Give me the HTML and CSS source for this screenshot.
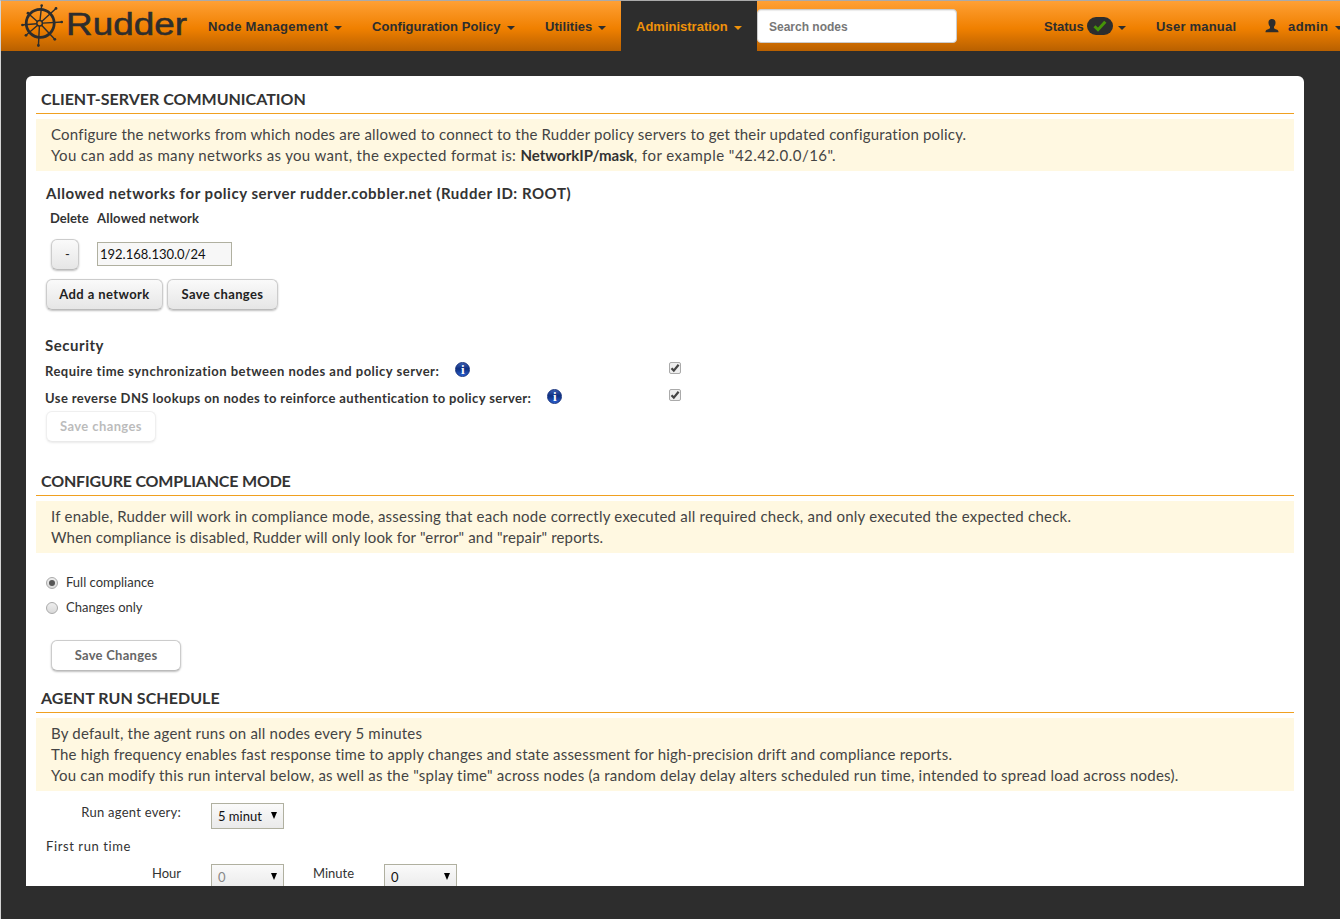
FILE: index.html
```html
<!DOCTYPE html>
<html lang="en">
<head>
<meta charset="utf-8">
<title>Rudder - Administration</title>
<link rel="stylesheet" href="styles.css">
</head>
<body>
<header class="navbar">
  <a class="brand">
    <svg width="168" height="50" viewBox="0 0 168 50">
      <g fill="none" stroke="#2d2d2d">
        <circle cx="19.2" cy="22.3" r="14" stroke-width="2.8"/>
        <circle cx="18.6" cy="22.3" r="2.8" stroke-width="1.5"/>
        <path stroke-width="1.4" d="M20.7 4L19 19.5M18.4 25L17.4 45M.7 24L15.8 22.7M21.5 22.1L41.5 21M6.7 12L16.3 20.6M20.6 24.2L34 38.5M35.5 7L20.7 20.4M16.6 24.3L4.7 34.5"/>
      </g>
      <g fill="#2d2d2d"><circle cx="20.7" cy="4.5" r="1.3"/><circle cx="17.4" cy="44.5" r="1.4"/><circle cx="1.5" cy="24" r="1.3"/><circle cx="40.7" cy="21" r="1.3"/><circle cx="7" cy="12.2" r="1.4"/><circle cx="33.8" cy="38.3" r="1.4"/><circle cx="35" cy="7.4" r="1.4"/><circle cx="5" cy="34.3" r="1.4"/></g>
      <text class="brand-name" x="45" y="34" textLength="121" lengthAdjust="spacingAndGlyphs">Rudder</text>
    </svg>
  </a>
  <nav class="menu">
    <a class="menu-item item-node">Node Management<i class="caret"></i></a>
    <a class="menu-item item-policy">Configuration Policy<i class="caret"></i></a>
    <a class="menu-item item-util">Utilities<i class="caret"></i></a>
    <a class="menu-item item-admin active">Administration<i class="caret"></i></a>
  </nav>
  <input class="search" placeholder="Search nodes">
  <nav class="menu menu-right">
    <a class="status">Status<span class="badge"><svg width="14" height="12" viewBox="0 0 14 12"><path d="M1.5 6.2L5 9.7L12.3 1.8" fill="none" stroke="#469408" stroke-width="3"/></svg></span><i class="caret"></i></a>
    <a class="manual">User manual</a>
    <a class="user"><svg width="14" height="14" viewBox="0 0 14 14"><path fill="#2d2d2d" d="M7 0C4.5 0 3.3 1.6 3.5 4C3.6 5.8 4.3 7 5 7.7V9.2C4.4 10.2 .5 10.2 .5 12.8V13.2H13.5V12.8C13.5 10.2 9.6 10.2 9 9.2V7.7C9.7 7 10.4 5.8 10.5 4C10.7 1.6 9.5 0 7 0Z"/></svg><span>admin</span><i class="caret"></i></a>
  </nav>
</header>
<main class="panel">
  <h1 class="title t1">CLIENT-SERVER COMMUNICATION</h1>
  <div class="info">
    <p class="a1">Configure the networks from which nodes are allowed to connect to the Rudder policy servers to get their updated configuration policy.</p>
    <p class="a2">You can add as many networks as you want, the expected format is: <b>NetworkIP/mask</b><span>, for example "42.42.0.0/16".</span></p>
  </div>
  <section class="networks">
    <h2 class="sub sub-net">Allowed networks for policy server rudder.cobbler.net (Rudder ID: ROOT)</h2>
    <div class="net-grid">
      <b class="th-del">Delete</b><b class="th-net">Allowed network</b>
      <button class="btn minus">-</button><input class="field" value="192.168.130.0/24">
    </div>
    <div class="actions"><button class="btn add">Add a network</button><button class="btn save">Save changes</button></div>
  </section>
  <section class="security">
    <h2 class="sub sub-sec">Security</h2>
    <div class="opt"><div class="opt-label"><b class="o1">Require time synchronization between nodes and policy server:</b><span class="info-icon"><span>i</span></span></div><span class="check"><svg width="10" height="10" viewBox="0 0 10 10"><path d="M1.5 5.2L3.8 7.6L8.6 1.7" fill="none" stroke="#444" stroke-width="2.2"/></svg></span></div>
    <div class="opt"><div class="opt-label"><b class="o2">Use reverse DNS lookups on nodes to reinforce authentication to policy server:</b><span class="info-icon"><span>i</span></span></div><span class="check"><svg width="10" height="10" viewBox="0 0 10 10"><path d="M1.5 5.2L3.8 7.6L8.6 1.7" fill="none" stroke="#444" stroke-width="2.2"/></svg></span></div>
    <button class="btn save disabled">Save changes</button>
  </section>
  <h1 class="title t2">CONFIGURE COMPLIANCE MODE</h1>
  <div class="info">
    <p class="b1">If enable, Rudder will work in compliance mode, assessing that each node correctly executed all required check, and only executed the expected check.</p>
    <p class="b2">When compliance is disabled, Rudder will only look for "error" and "repair" reports.</p>
  </div>
  <section class="compliance">
    <label class="choice"><span class="radio on"></span><span class="r1">Full compliance</span></label>
    <label class="choice"><span class="radio"></span><span class="r2">Changes only</span></label>
    <button class="btn save-mode">Save Changes</button>
  </section>
  <h1 class="title t3">AGENT RUN SCHEDULE</h1>
  <div class="info tall">
    <p class="c1">By default, the agent runs on all nodes every 5 minutes</p>
    <p class="c2">The high frequency enables fast response time to apply changes and state assessment for high-precision drift and compliance reports.</p>
    <p class="c3">You can modify this run interval below, as well as the "splay time" across nodes (a random delay delay alters scheduled run time, intended to spread load across nodes).</p>
  </div>
  <section class="schedule">
    <div class="row"><span class="lbl l1">Run agent every:</span><span class="select">5 minut<i></i></span></div>
    <p class="first">First run time</p>
    <div class="row"><span class="lbl l2">Hour</span><span class="select off">0<i></i></span><span class="lbl l3">Minute</span><span class="select">0<i></i></span></div>
  </section>
</main>
</body>
</html>
```
FILE: styles.css
```css
* { box-sizing: border-box; }
html { background: #2d2d2d; }
body { margin: 0; height: 919px; overflow: hidden; border-left: 1px solid #d4d4d4; border-top: 1px solid #aaa; background: #2d2d2d; color: #333; font: 13px/21px Lato, sans-serif; }
h1, h2, p { margin: 0; }
button, input { font: inherit; color: inherit; }

/* Top bar */
.navbar { display: flex; height: 50px; background: linear-gradient(#ffa035, #f08000 55%, #b86000); color: #2d2d2d; font: bold 13px/50px "Liberation Sans", sans-serif; white-space: nowrap; overflow: hidden; }
.brand { width: 192px; padding-left: 20px; flex: none; }
.brand svg { display: block; }
.brand-name { font: 31px "Liberation Sans", sans-serif; fill: #2d2d2d; stroke: #2d2d2d; stroke-width: .5px; }
.menu { display: flex; flex: none; }
.menu-item { display: flex; height: 50px; align-items: center; justify-content: space-between; padding: 2px 15px 0; letter-spacing: .3px; }
.item-node { width: 164px; }
.item-policy { width: 173px; letter-spacing: .07px; }
.item-util { width: 91px; letter-spacing: .05px; }
.item-admin { width: 136px; letter-spacing: 0; }
.active { background: #2d2d2d; color: #f0920a; }
.caret { flex: none; border: 4px solid transparent; border-top-color: currentColor; border-bottom: 0; margin-top: 2px; }
.search { width: 200px; height: 34px; margin-top: 8px; border: 1px solid #ccc; border-radius: 4px; padding: 2px 11px 0; font: bold 12px "Liberation Sans", sans-serif; box-shadow: inset 0 1px 1px rgba(0,0,0,.08); flex: none; }
.search::placeholder { color: #777; opacity: 1; }
.menu-right { margin-left: 87px; letter-spacing: .4px; }
.menu-right a { display: flex; align-items: center; height: 50px; padding-top: 2px; }
.menu-right .status { width: 112px; letter-spacing: 0; }
.badge { width: 26px; height: 18px; border-radius: 9px; background: #2d2d2d; margin: -2px 5px 0 3px; display: flex; align-items: center; justify-content: center; }
.menu-right .manual { width: 109px; letter-spacing: .2px; }
.user svg { margin-top: -2px; }
.user span { margin: 0 7px 0 9px; }

/* Settings panel */
.panel { margin: 25px 0 0 25px; width: 1278px; height: 810px; padding: 0 10px; background: #fff; border-radius: 6px 6px 0 0; overflow: hidden; white-space: nowrap; }
.title { height: 38px; border-bottom: 1px solid #f0a020; padding: 2px 5px 0; font: bold 16px/42px Lato, sans-serif; }
.t1 { letter-spacing: 0; }
.t2 { letter-spacing: -.18px; }
.t3 { height: 39px; padding-top: 3px; letter-spacing: .06px; }
.info { height: 52px; margin-top: 5px; padding: 5px 15px; background: #fff8e1; color: #444; font-size: 15px; line-height: 21px; }
.tall { height: 73px; }
.a1 { letter-spacing: .19px; }
.a2 { letter-spacing: .35px; }
.a2 b { letter-spacing: 0; color: #333; }
.a2 span { letter-spacing: .47px; }
.b1 { letter-spacing: .23px; }
.b2 { letter-spacing: .15px; }
.c1 { letter-spacing: .2px; }
.c2 { letter-spacing: .2px; }
.c3 { letter-spacing: .23px; }

.networks { height: 158px; padding: 12px 0 0 10px; }
.sub { font-size: 15px; line-height: 21px; letter-spacing: .53px; }
.net-grid { display: grid; grid-template-columns: 46px 135px; grid-template-rows: 28px 40px; padding-left: 5px; align-items: center; }
.th-del { margin-left: -1px; }
.th-net { letter-spacing: .2px; }
.btn { height: 31px; border: 1px solid #ccc; border-bottom-color: #bbb; border-radius: 6px; background: linear-gradient(#fafafa, #e6e6e6); box-shadow: 0 1px 2px rgba(0,0,0,.25); color: #222; font-weight: bold; padding: 0 0 1px; letter-spacing: .4px; }
.minus { width: 28px; font-weight: normal; padding: 0 0 0 5px; margin-top: 4px; }
.field { width: 135px; height: 24px; border: 1px solid #b0b0a0; background: #f7f7f7; padding: 0 2px; color: #111; margin-top: 4px; }
.actions { display: flex; gap: 4px; margin-top: 7px; }
.add { width: 117px; }
.save { width: 111px; }

.security { height: 129px; padding: 6px 0 0 9px; }
.opt { display: flex; height: 27px; }
.opt-label { display: flex; width: 624px; height: 27px; align-items: center; padding-top: 2px; }
.o1 { letter-spacing: .49px; }
.o2 { letter-spacing: .395px; }
.sub-sec { margin-bottom: 1px; }
.info-icon { width: 15px; height: 15px; border-radius: 50%; margin: -4px 0 0 16px; background: linear-gradient(#3a5cb0, #0e2f80 45%, #2a5fd0); border: 1px solid #14307c; color: #fff; font: bold 13px/13px "Liberation Serif", serif; text-align: center; }
.check { width: 12px; height: 12px; border: 1px solid #aaa; border-radius: 2px; background: #eee; margin-top: 5px; }
.check svg { display: block; }
.security .save { width: 110px; margin: 0 0 0 1px; opacity: .3; background: #fff; }

.compliance { height: 121px; padding: 17px 0 0 10px; }
.choice { display: flex; height: 25px; align-items: center; }
.radio { width: 12px; height: 12px; border: 1px solid #aaa; border-radius: 50%; background: linear-gradient(#eee, #d9d9d9); margin-right: 8px; display: grid; place-items: center; }
.on::after { content: ""; width: 6px; height: 6px; border-radius: 50%; background: #555; }
.save-mode { width: 130px; background: #fff; color: #666; margin: 20px 0 0 5px; display: block; letter-spacing: .27px; }

.schedule { padding: 12px 0 0 10px; }
.row { display: flex; }
.lbl { line-height: 19px; text-align: right; width: 135px; }
.l1 { letter-spacing: .25px; }
.select { width: 73px; height: 26px; margin-left: 30px; border: 1px solid #b0b0a0; background: linear-gradient(#fafafa, #eaeaea); color: #111; display: flex; align-items: center; justify-content: space-between; padding: 0 6px 0 6px; line-height: 24px; }
.select i { border: 3.5px solid transparent; border-top: 7px solid #000; border-bottom: 0; margin-top: -2px; }
.off { color: #888; }
.first { height: 35px; line-height: 35px; letter-spacing: .6px; }
.l3 { width: 70px; }
```
